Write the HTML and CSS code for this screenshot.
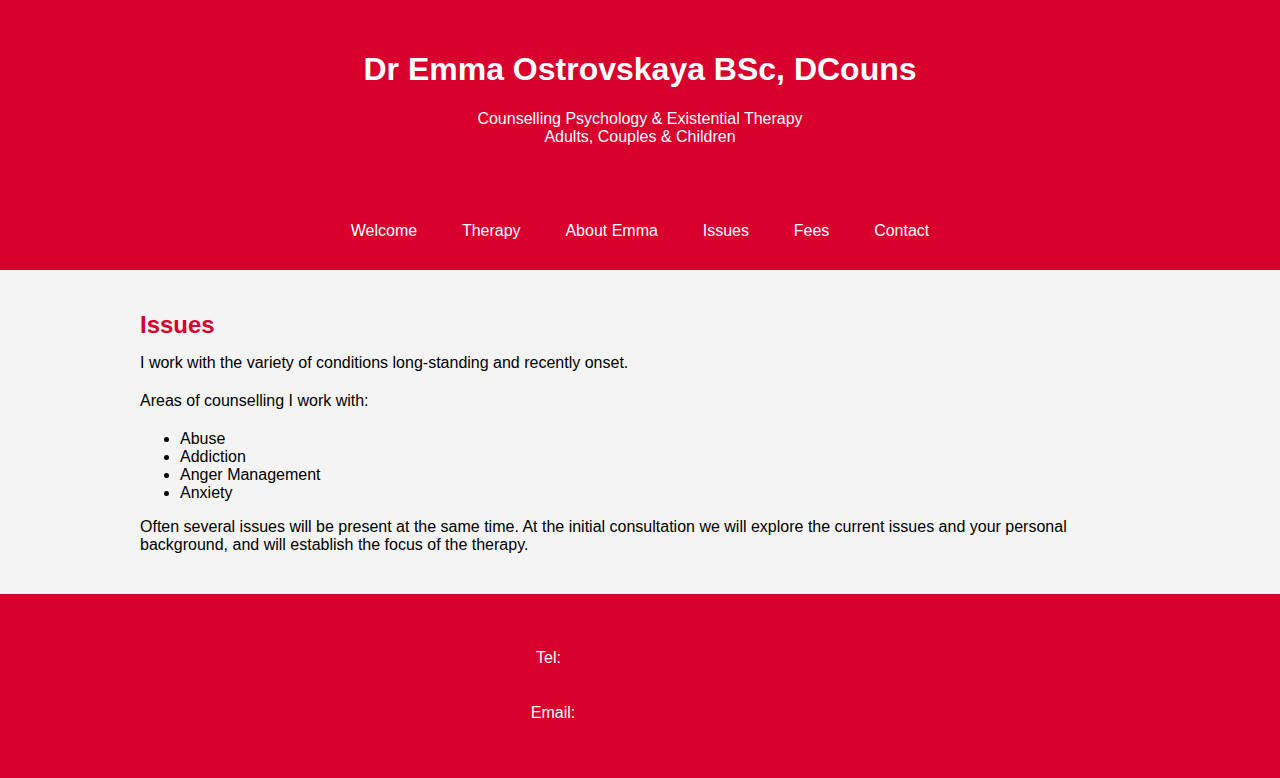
FILE: index.html
```html
<!DOCTYPE html>
<html lang="en">
<head>
  <meta charset="UTF-8" />
  <meta name="viewport" content="width=device-width, initial-scale=1.0"/>
  <title>Dr Emma Ostrovskaya - Issues</title>
  <link rel="stylesheet" href="styles.css">
</head>
<body>
  <header class="site-header">
    <h1 class="site-title">Dr Emma Ostrovskaya BSc, DCouns</h1>
    <p class="site-tagline">Counselling Psychology &amp; Existential Therapy<br>Adults, Couples &amp; Children</p>
    <nav class="main-nav">
      <a href="#">Welcome</a>
      <a href="#">Therapy</a>
      <a href="#">About Emma</a>
      <a href="#">Issues</a>
      <a href="#">Fees</a>
      <a href="#">Contact</a>
    </nav>
  </header>

  <main class="content">
    <h2>Issues</h2>
    <p>I work with the variety of conditions long-standing and recently onset.</p>
    <p>Areas of counselling I work with:</p>
    <ul>
      <li>Abuse</li>
      <li>Addiction</li>
      <li>Anger Management</li>
      <li>Anxiety</li>
    </ul>
    <p>Often several issues will be present at the same time. At the initial consultation we will explore the current issues and your personal background, and will establish the focus of the therapy.</p>
  </main>

  <footer class="site-footer">
    <div class="contact-list">
      <div class="contact-item">Tel:&nbsp;&nbsp;</div>
      <div class="contact-item">Email:</div>
    </div>
  </footer>
</body>
</html>
```

FILE: styles.css
```css
body {
  margin: 0;
  background: #f4f4f4;
  color: #000;
  font-family: "Liberation Sans", Arial, sans-serif;
  font-size: 16px;
}

.site-header {
  background: #d8002c;
  color: #fff;
  text-align: center;
  padding: 51px 20px 30px;
}

.site-title {
  margin: 0;
  font-size: 32px;
  font-weight: bold;
}

.site-tagline {
  margin: 22px 0 0;
  line-height: 18px;
}

.main-nav {
  display: flex;
  justify-content: center;
  gap: 44.8px;
  margin-top: 76px;
  line-height: 18px;
}

.main-nav a {
  color: #fff;
  text-decoration: none;
}

.content {
  width: 1000px;
  margin: 0 auto;
  padding: 41px 0 20px;
  line-height: 18px;
}

.content h2 {
  margin: 0 0 15px;
  color: #d8002c;
  font-size: 24px;
  line-height: 28px;
}

.content p {
  margin: 0 0 20px;
}

.content ul {
  margin: 16px 0;
}

.site-footer {
  background: #d8002c;
  color: #fff;
  padding: 55px 0 56px;
}

.contact-list {
  display: flex;
  flex-direction: column;
  align-items: center;
  gap: 37px;
  padding-right: 174px;
  line-height: 18px;
}
```
